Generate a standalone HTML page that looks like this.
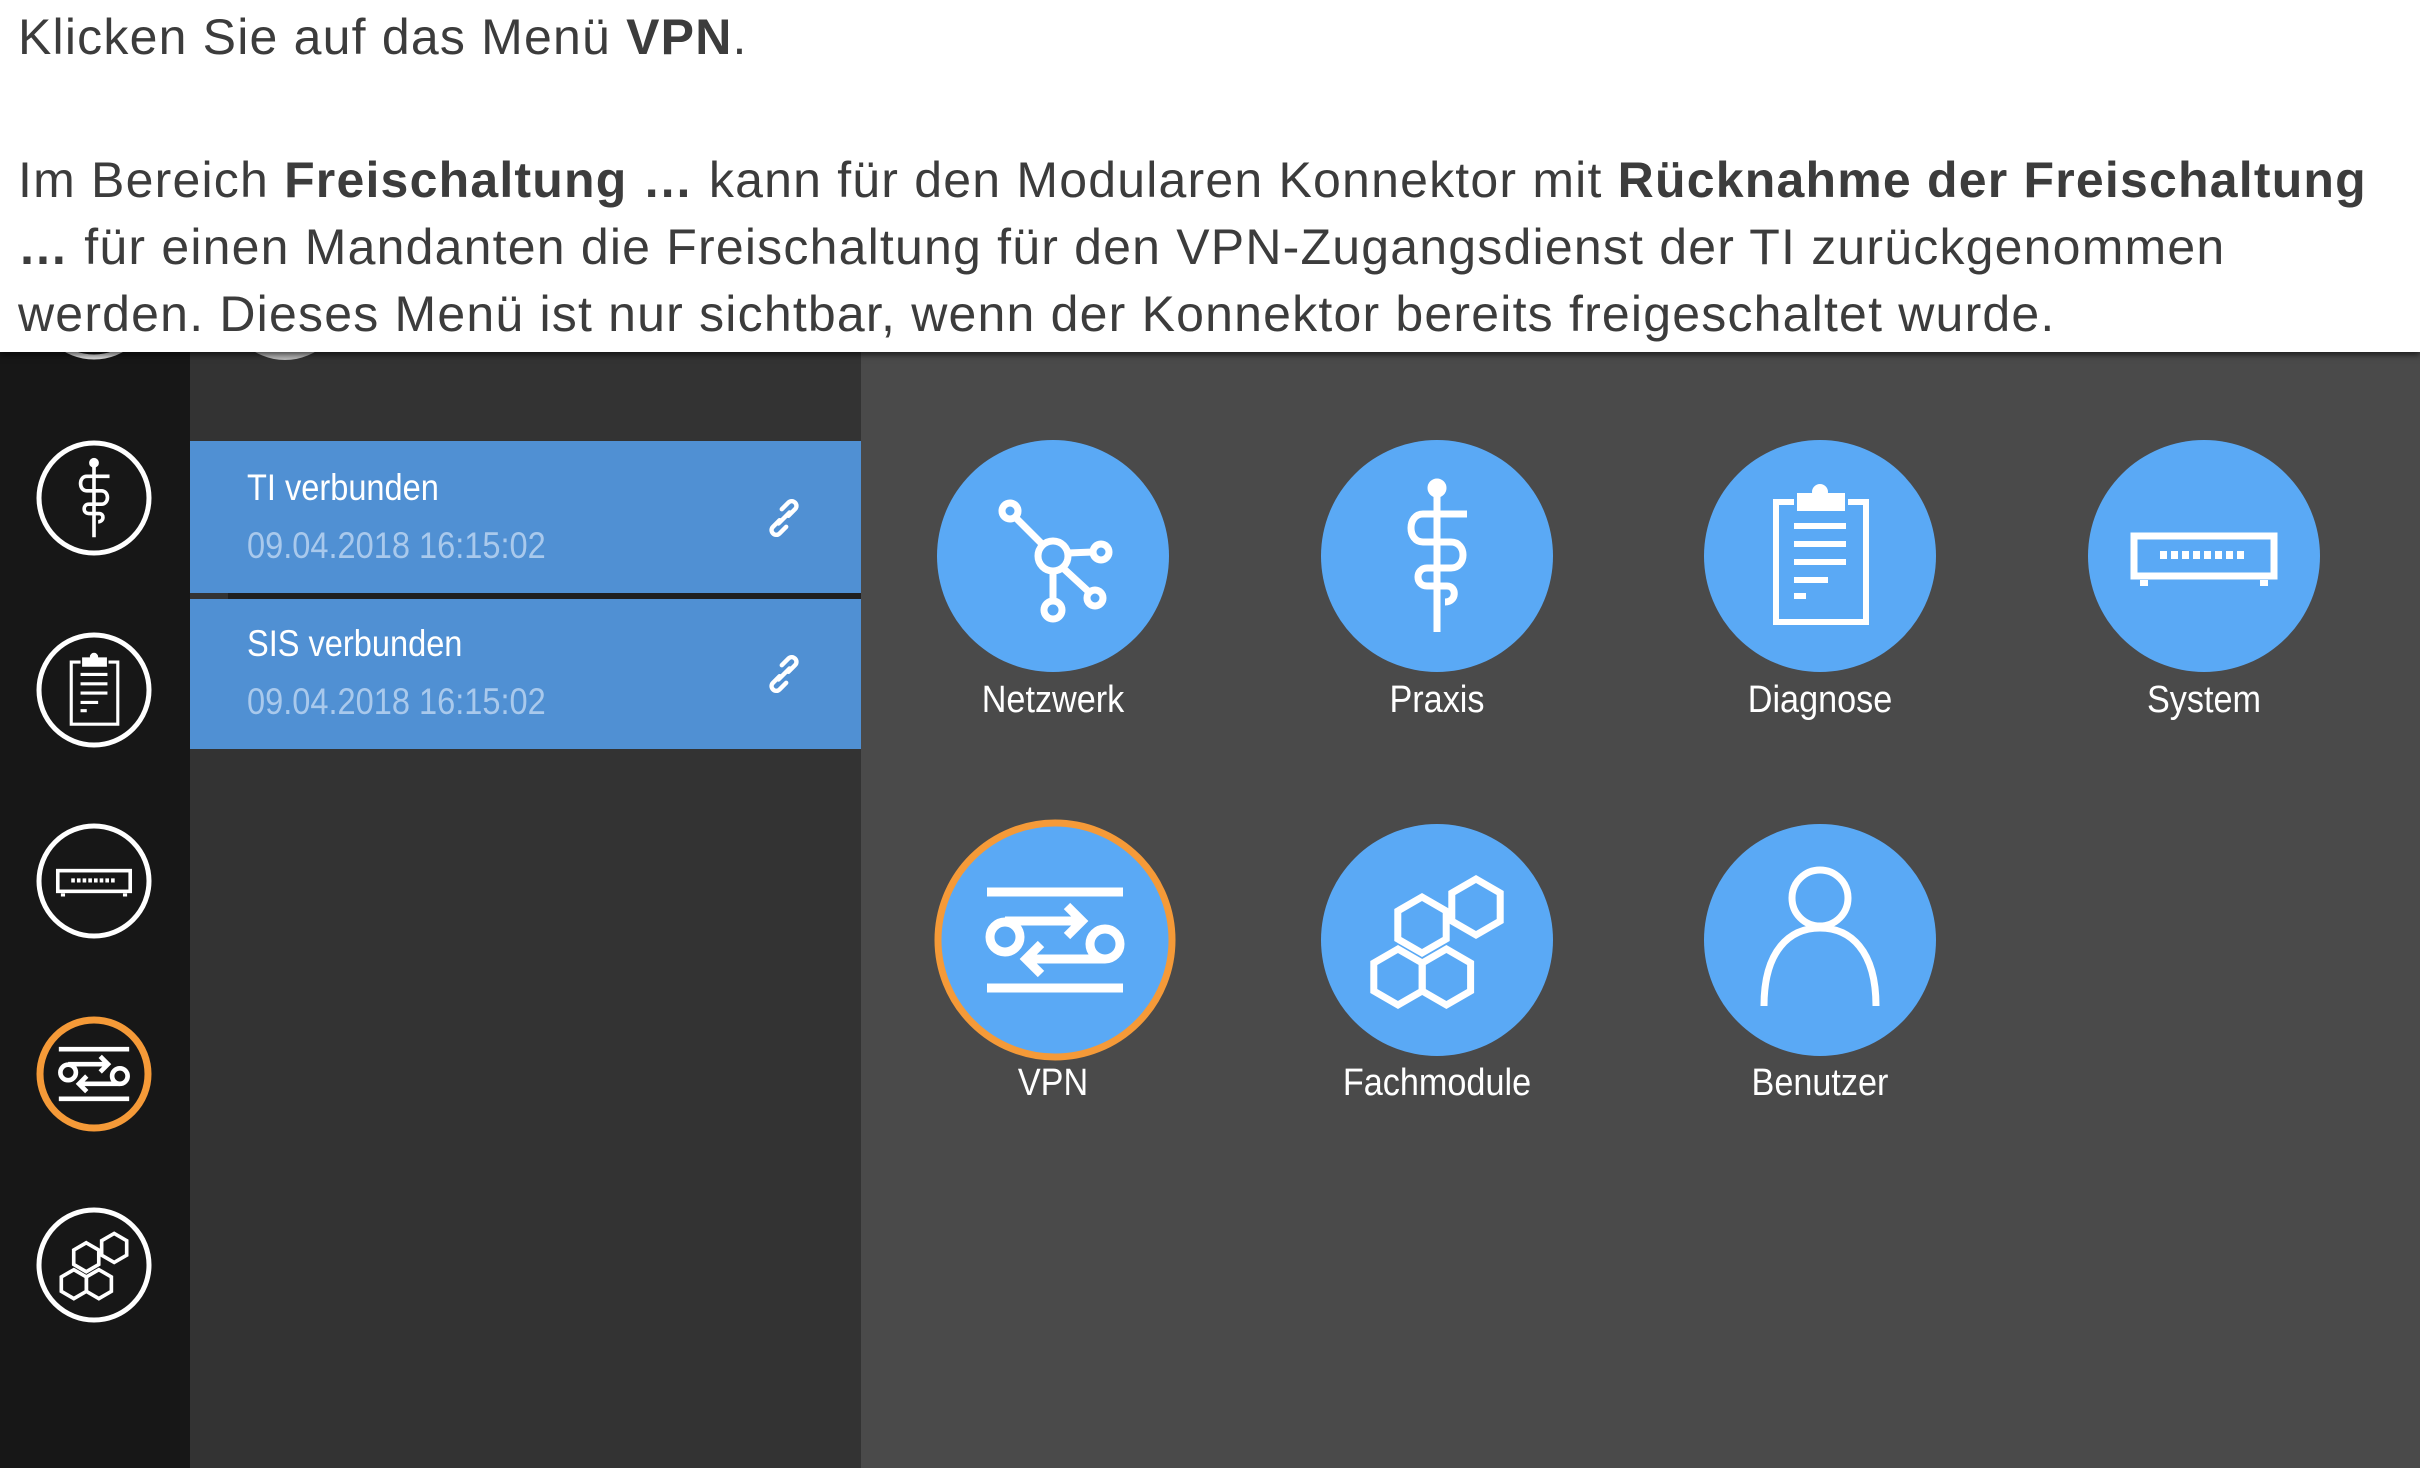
<!DOCTYPE html>
<html><head><meta charset="utf-8">
<style>
html,body{margin:0;padding:0}
body{width:2420px;height:1468px;overflow:hidden;position:relative;background:#4a4a4a;font-family:"Liberation Sans",sans-serif}
#top{position:absolute;left:0;top:0;width:2420px;height:352px;background:#fff;z-index:5;box-shadow:0 3px 6px rgba(0,0,0,.6)}
#top p{position:absolute;left:18px;margin:0;font-size:50px;color:#3c3c3c;white-space:nowrap;letter-spacing:1.2px}
#side{position:absolute;left:0;top:0;width:190px;height:1468px;background:#171717}
#panel{position:absolute;left:190px;top:0;width:671px;height:1468px;background:#333}
.item{position:absolute;left:190px;width:671px;background:#5090d3}
.t{position:absolute;left:57px;color:#fff;font-size:37px;transform:scaleX(.88);transform-origin:left}
.d{position:absolute;left:57px;color:#a9c9ec;font-size:37px;transform:scaleX(.88);transform-origin:left}
.lbl{position:absolute;width:300px;text-align:center;color:#fff;font-size:38px;transform:scaleX(.9)}
svg{position:absolute;left:0;top:0}
</style></head><body>
<div id="side"></div>
<div id="panel"></div>
<div class="item" style="top:441px;height:152px"><div class="t" style="top:26px">TI verbunden</div><div class="d" style="top:84px">09.04.2018 16:15:02</div></div>
<div style="position:absolute;left:228px;top:593px;width:633px;height:6px;background:#1f1f1f"></div>
<div class="item" style="top:599px;height:150px"><div class="t" style="top:24px">SIS verbunden</div><div class="d" style="top:82px">09.04.2018 16:15:02</div></div>

<svg width="2420" height="1468" viewBox="0 0 2420 1468">
<defs>
<symbol id="net" viewBox="-116 -116 232 232"><g fill="none" stroke="#fff" stroke-width="7"><circle cx="0" cy="0" r="15"/><circle cx="-43" cy="-45" r="8"/><circle cx="48" cy="-4" r="8"/><circle cx="0" cy="54" r="9"/><circle cx="42" cy="42" r="8"/><path d="M-38-39L-10-11M15-3L40-4M0 15V45M10 12L36 36"/></g></symbol>
<symbol id="prx" viewBox="-116 -116 232 232"><g fill="none" stroke="#fff" stroke-width="7"><path d="M0-64V76"/><circle cx="0" cy="-68" r="6" fill="#fff"/><path d="M30-42H-14C-30-42-30-14-14-14H14C30-14 30 12 14 12H-10C-22 12-22 30-10 30H10C20 30 20 46 8 46"/></g></symbol>
<symbol id="dia" viewBox="-116 -116 232 232"><g fill="none" stroke="#fff" stroke-width="6"><path d="M-26-54H-44V66H46V-54H28"/><path d="M-20-48H22V-60H-20Z" fill="#fff"/><circle cx="0" cy="-64" r="5" fill="#fff"/><path d="M-26-30H26M-26-12H26M-26 6H26M-26 24H8M-26 40H-14"/></g></symbol>
<symbol id="sys" viewBox="-116 -116 232 232"><g fill="none" stroke="#fff" stroke-width="7"><rect x="-70" y="-20" width="140" height="40"/><path d="M-60 24V30M60 24V30" stroke-width="8"/><path d="M-44 -1H44" stroke-dasharray="7 4" stroke-width="8"/></g></symbol>
<symbol id="vpn" viewBox="-116 -116 232 232"><g fill="none" stroke="#fff" stroke-width="9"><path d="M-68-48H68M-68 48H68"/><circle cx="-50" cy="-3" r="15"/><path d="M-50-19H22M12-34L27-19 12-4"/><circle cx="50" cy="4" r="15"/><path d="M50 19H-24M-14 4L-29 19-14 34"/></g></symbol>
<symbol id="fac" viewBox="-116 -116 232 232"><g fill="none" stroke="#fff" stroke-width="7" stroke-linejoin="miter">
<polygon points="39,-61 63.2,-47 63.2,-19 39,-5 14.8,-19 14.8,-47"/>
<polygon points="-15,-43 9.2,-29 9.2,-1 -15,13 -39.2,-1 -39.2,-29"/>
<polygon points="-39,9 -14.8,23 -14.8,51 -39,65 -63.2,51 -63.2,23"/>
<polygon points="9.4,9 33.6,23 33.6,51 9.4,65 -14.8,51 -14.8,23"/>
</g></symbol>
<symbol id="usr" viewBox="-116 -116 232 232"><g fill="none" stroke="#fff" stroke-width="7"><circle cx="0" cy="-42" r="28"/><path d="M-56 66C-56 10-30-12 0-12S56 10 56 66"/></g></symbol>
<symbol id="lnk" viewBox="0 0 40 40"><g fill="none" stroke="#fff" stroke-width="4" stroke-linecap="round"><path d="M18 12L24 6C28 2 34 8 30 12L24 18"/><path d="M22 28L16 34C12 38 6 32 10 28L16 22"/><path d="M15 25L25 15"/></g></symbol>
</defs>
<circle cx="94" cy="300" r="57" fill="none" stroke="#ddd" stroke-width="5"/>
<circle cx="285" cy="300" r="60" fill="#bbb"/>
<g fill="none" stroke="#fff" stroke-width="5">
<circle cx="94" cy="498" r="55"/><circle cx="94" cy="690" r="55"/><circle cx="94" cy="881" r="55"/><circle cx="94" cy="1265" r="55"/></g>
<circle cx="94" cy="1074" r="54" fill="none" stroke="#f59a38" stroke-width="7"/>
<use href="#prx" x="34" y="438" width="120" height="120"/>
<use href="#dia" x="34" y="630" width="120" height="120"/>
<use href="#sys" x="34" y="821" width="120" height="120"/>
<use href="#vpn" x="34" y="1014" width="120" height="120"/>
<use href="#fac" x="34" y="1205" width="120" height="120"/>
<use href="#lnk" x="762" y="496" width="44" height="44"/>
<use href="#lnk" x="762" y="652" width="44" height="44"/>
<g fill="#5aa9f5">
<circle cx="1053" cy="556" r="116"/><circle cx="1437" cy="556" r="116"/><circle cx="1820" cy="556" r="116"/><circle cx="2204" cy="556" r="116"/>
<circle cx="1055" cy="940" r="116"/><circle cx="1437" cy="940" r="116"/><circle cx="1820" cy="940" r="116"/></g>
<circle cx="1055" cy="940" r="117" fill="none" stroke="#f59a38" stroke-width="7"/>
<use href="#net" x="937" y="440" width="232" height="232"/>
<use href="#prx" x="1321" y="440" width="232" height="232"/>
<use href="#dia" x="1704" y="440" width="232" height="232"/>
<use href="#sys" x="2088" y="440" width="232" height="232"/>
<use href="#vpn" x="939" y="824" width="232" height="232"/>
<use href="#fac" x="1321" y="824" width="232" height="232"/>
<use href="#usr" x="1704" y="824" width="232" height="232"/>
</svg>
<div class="lbl" style="left:903px;top:679px">Netzwerk</div>
<div class="lbl" style="left:1287px;top:679px">Praxis</div>
<div class="lbl" style="left:1670px;top:679px">Diagnose</div>
<div class="lbl" style="left:2054px;top:679px">System</div>
<div class="lbl" style="left:903px;top:1062px">VPN</div>
<div class="lbl" style="left:1287px;top:1062px">Fachmodule</div>
<div class="lbl" style="left:1670px;top:1062px">Benutzer</div>

<div id="top">
<p style="top:8px">Klicken Sie auf das Menü <b>VPN</b>.</p>
<p style="top:151px">Im Bereich <b>Freischaltung …</b> kann für den Modularen Konnektor mit <b>Rücknahme der Freischaltung</b></p>
<p style="top:218px"><b>…</b> für einen Mandanten die Freischaltung für den VPN-Zugangsdienst der TI zurückgenommen</p>
<p style="top:285px">werden. Dieses Menü ist nur sichtbar, wenn der Konnektor bereits freigeschaltet wurde.</p>
</div>
</body></html>
